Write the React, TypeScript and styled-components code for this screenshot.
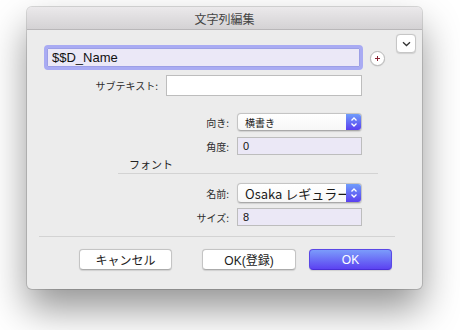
import React from "react";
import styled, { createGlobalStyle } from "styled-components";

const GlobalStyle = createGlobalStyle`
  body {
    margin: 0;
    background: #ffffff;
    font-family: "Liberation Sans", "Noto Sans CJK JP", sans-serif;
  }
`;

const Stage = styled.div`
  width: 460px;
  height: 330px;
  padding: 7px 0 0 27px;
  box-sizing: border-box;
  overflow: hidden;
  background: #ffffff;
`;

const Window = styled.div`
  width: 395px;
  height: 282px;
  box-sizing: border-box;
  border-radius: 5px;
  background: #ececec;
  box-shadow: 0 0 0 1px rgba(0, 0, 0, 0.14), 0 20px 38px rgba(0, 0, 0, 0.42);
  display: flex;
  flex-direction: column;
  overflow: hidden;
`;

const TitleBar = styled.div`
  height: 22px;
  flex-shrink: 0;
  border-bottom: 1px solid #b9b7b9;
  background: linear-gradient(#ebe9eb, #d4d2d4);
  display: flex;
  align-items: center;
  justify-content: center;
  font-family: "Noto Sans CJK JP", sans-serif;
  font-size: 12px;
  color: #444;
`;

const TopRow = styled.div`
  display: flex;
  align-items: flex-start;
  margin-top: 4px;
  padding-left: 17px;
`;

const MainInput = styled.div`
  margin-top: 11px;
  width: 319px;
  height: 25px;
  box-sizing: border-box;
  border: 3px solid #a9abf3;
  border-radius: 4px;
  background: #ebe8f7;
  box-shadow: inset 0 0 0 1px #9c9fe6;
  display: flex;
  align-items: center;
  padding-left: 5px;
  font-size: 13px;
  color: #111;
`;

const PlusButton = styled.div`
  margin-top: 17px;
  margin-left: 7px;
  width: 15px;
  height: 15px;
  box-sizing: border-box;
  border-radius: 50%;
  border: 1px solid #b8b8b8;
  background: #fff;
  box-shadow: 0 0.5px 1px rgba(0, 0, 0, 0.12);
  display: flex;
  align-items: center;
  justify-content: center;
`;

const ChevronButton = styled.div`
  margin-left: 11px;
  width: 20px;
  height: 19px;
  box-sizing: border-box;
  border-radius: 4px;
  border: 1px solid #c6c6c6;
  background: #fff;
  box-shadow: 0 0.5px 1px rgba(0, 0, 0, 0.12);
  display: flex;
  align-items: center;
  justify-content: center;
`;

const FieldRow = styled.div<{ $labelWidth: number; $top: number }>`
  display: flex;
  align-items: center;
  gap: 8px;
  margin-top: ${(p) => p.$top}px;
`;

const Label = styled.span<{ $width: number }>`
  width: ${(p) => p.$width}px;
  text-align: right;
  font-family: "Noto Sans CJK JP", sans-serif;
  font-size: 10px;
  color: #2c2c2c;
`;

const TextField = styled.div<{ $width: number; $height: number; $tinted?: boolean }>`
  width: ${(p) => p.$width}px;
  height: ${(p) => p.$height}px;
  box-sizing: border-box;
  border: 1px solid #bdbdbd;
  background: ${(p) => (p.$tinted ? "#ebe8f6" : "#ffffff")};
  display: flex;
  align-items: center;
  padding-left: 5px;
  font-size: 11px;
  color: #111;
`;

const Select = styled.div<{ $height: number; $big?: boolean }>`
  width: 125px;
  height: ${(p) => p.$height}px;
  box-sizing: border-box;
  border: 1px solid #c4c4c4;
  border-bottom-color: #a9a9a9;
  border-radius: 4px;
  background: linear-gradient(#ffffff, #f7f7f7);
  box-shadow: 0 0.5px 1px rgba(0, 0, 0, 0.12);
  display: flex;
  align-items: stretch;
  overflow: hidden;
`;

const SelectText = styled.span<{ $big?: boolean }>`
  flex: 1;
  display: flex;
  align-items: center;
  padding-left: ${(p) => (p.$big ? 7 : 7)}px;
  white-space: nowrap;
  overflow: hidden;
  font-family: "Noto Sans CJK JP", sans-serif;
  font-size: ${(p) => (p.$big ? 13 : 10)}px;
  color: #1a1a1a;
`;

const Stepper = styled.span`
  width: 15px;
  flex-shrink: 0;
  background: linear-gradient(#6f9cfb, #5a40f0);
  display: flex;
  align-items: center;
  justify-content: center;
`;

const SectionTitle = styled.div`
  margin-top: 1px;
  margin-left: 102px;
  height: 16px;
  line-height: 16px;
  font-family: "Noto Sans CJK JP", sans-serif;
  font-size: 11px;
  color: #222;
`;

const Separator = styled.div<{ $left: number; $width: number; $top: number }>`
  margin-top: ${(p) => p.$top}px;
  margin-left: ${(p) => p.$left}px;
  width: ${(p) => p.$width}px;
  height: 1px;
  background: #d3d3d3;
`;

const ButtonRow = styled.div`
  display: flex;
  margin-top: 12px;
  padding-left: 52px;
`;

const Button = styled.div<{ $width: number; $gap: number; $primary?: boolean }>`
  margin-left: ${(p) => p.$gap}px;
  width: ${(p) => p.$width}px;
  height: 21px;
  box-sizing: border-box;
  border-radius: 4px;
  border: 1px solid ${(p) => (p.$primary ? "#5a48e6" : "#c4c4c4")};
  border-bottom-color: ${(p) => (p.$primary ? "#4a2fd8" : "#ababab")};
  background: ${(p) =>
    p.$primary ? "linear-gradient(#7b9cfb, #5c42f1)" : "#ffffff"};
  box-shadow: 0 0.5px 1px rgba(0, 0, 0, 0.12);
  display: flex;
  align-items: center;
  justify-content: center;
  font-family: "Liberation Sans", "Noto Sans CJK JP", sans-serif;
  font-size: 12px;
  color: ${(p) => (p.$primary ? "#ffffff" : "#1c1c1c")};
`;

const StepperIcon = () => (
  <svg width="8" height="12" viewBox="0 0 8 12">
    <path d="M1.5 4.5 L4 2 L6.5 4.5" fill="none" stroke="#fff" strokeWidth="1.3" />
    <path d="M1.5 7.5 L4 10 L6.5 7.5" fill="none" stroke="#fff" strokeWidth="1.3" />
  </svg>
);

const fields = {
  direction: "横書き",
  angle: "0",
  fontName: "Osaka レギュラー",
  size: "8",
};

export default function App() {
  return (
    <Stage>
      <GlobalStyle />
      <Window>
        <TitleBar>文字列編集</TitleBar>
        <TopRow>
          <MainInput>$$D_Name</MainInput>
          <PlusButton>
            <svg width="7" height="7" viewBox="0 0 7 7">
              <path d="M3.5 1 V6 M1 3.5 H6" stroke="#8a2434" strokeWidth="1" />
            </svg>
          </PlusButton>
          <ChevronButton>
            <svg width="9" height="6" viewBox="0 0 9 6">
              <path d="M1 1.2 L4.5 4.5 L8 1.2" fill="none" stroke="#333" strokeWidth="1.3" />
            </svg>
          </ChevronButton>
        </TopRow>

        <FieldRow $labelWidth={131} $top={5}>
          <Label $width={131}>サブテキスト:</Label>
          <TextField $width={196} $height={21} />
        </FieldRow>

        <FieldRow $labelWidth={202} $top={17}>
          <Label $width={202}>向き:</Label>
          <Select $height={18}>
            <SelectText>{fields.direction}</SelectText>
            <Stepper>
              <StepperIcon />
            </Stepper>
          </Select>
        </FieldRow>

        <FieldRow $labelWidth={202} $top={6}>
          <Label $width={202}>角度:</Label>
          <TextField $width={125} $height={18} $tinted>
            {fields.angle}
          </TextField>
        </FieldRow>

        <SectionTitle>フォント</SectionTitle>
        <Separator $left={91} $width={260} $top={1} />

        <FieldRow $labelWidth={202} $top={9}>
          <Label $width={202}>名前:</Label>
          <Select $height={20}>
            <SelectText $big>{fields.fontName}</SelectText>
            <Stepper>
              <StepperIcon />
            </Stepper>
          </Select>
        </FieldRow>

        <FieldRow $labelWidth={202} $top={5}>
          <Label $width={202}>サイズ:</Label>
          <TextField $width={125} $height={18} $tinted>
            {fields.size}
          </TextField>
        </FieldRow>

        <Separator $left={12} $width={356} $top={10} />

        <ButtonRow>
          <Button $width={93} $gap={0}>
            キャンセル
          </Button>
          <Button $width={94} $gap={30}>
            OK(登録)
          </Button>
          <Button $width={83} $gap={13} $primary>
            OK
          </Button>
        </ButtonRow>
      </Window>
    </Stage>
  );
}
